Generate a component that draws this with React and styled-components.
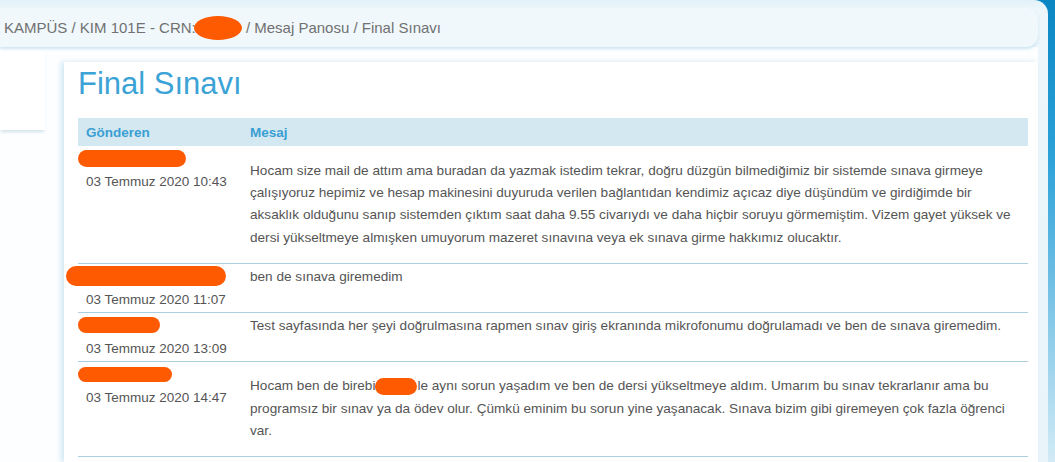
import React from 'react'
import styled, { createGlobalStyle } from 'styled-components'

const GlobalStyle = createGlobalStyle`
  html, body {
    margin: 0;
    padding: 0;
  }
  body {
    font-family: "Liberation Sans", Arial, sans-serif;
    background: #ffffff;
  }
`

const Page = styled.div`
  display: flex;
  height: 100vh;
  overflow: hidden;
  background: linear-gradient(to bottom, #0a86c3 0%, #2da2d9 35%, #86c9e8 70%, #d2ebf6 100%);
`

const Frame = styled.div`
  flex: 1;
  margin-right: 7px;
  display: flex;
  flex-direction: column;
  padding: 8px 10px 0 0;
  background: linear-gradient(to bottom, #e2f1f9 0px, #ecf6fb 8px, #e8f4fa 100%);
  border-top-right-radius: 14px;
`

const Breadcrumb = styled.div`
  height: 39px;
  flex-shrink: 0;
  display: flex;
  align-items: center;
  padding-left: 4px;
  white-space: pre;
  background: #f0f8fc;
  border-radius: 0 12px 12px 0;
  box-shadow: 0 2px 3px rgba(200, 226, 240, 0.9);
  font-size: 15px;
  color: #717171;
  position: relative;
  z-index: 1;
`

const CrumbBlob = styled.span`
  display: inline-block;
  width: 48px;
  height: 24px;
  margin-left: -2px;
  border-radius: 50%;
  background: #fe5a02;
`

const Content = styled.div`
  flex: 1;
  display: flex;
  align-items: flex-start;
  gap: 19px;
  background: #fdfeff;
`

const Sidebar = styled.div`
  width: 45px;
  height: 80px;
  margin-top: 3px;
  background: #ffffff;
  box-shadow: 0 3px 3px -1px rgba(205, 224, 234, 0.9);
`

const Panel = styled.div`
  flex: 1;
  align-self: stretch;
  margin-top: 15px;
  padding: 4px 10px 0 14px;
  background: #ffffff;
  box-shadow: -3px 0 5px rgba(205, 230, 243, 0.9);
`

const Title = styled.h1`
  margin: 0 0 16px;
  font-size: 31px;
  line-height: 36px;
  font-weight: normal;
  color: #3ba3d6;
`

const Table = styled.table`
  width: 100%;
  border-collapse: collapse;
  font-size: 13.5px;
  color: #555555;
`

const HeadCell = styled.th`
  height: 28px;
  padding: 0 8px;
  width: ${p => p.$width || 'auto'};
  background: #d4e8f1;
  color: #3a9fd3;
  font-weight: bold;
  text-align: left;
`

const SenderCell = styled.td`
  padding: 1px 8px;
  vertical-align: top;
  line-height: 23px;
  border-bottom: 1px solid #a9cfe1;
  white-space: nowrap;
`

const NameLine = styled.div`
  height: 23px;
  display: flex;
  align-items: center;
`

const NameBlob = styled.span`
  display: block;
  width: ${p => p.$w}px;
  height: ${p => p.$h}px;
  margin-left: ${p => p.$left}px;
  border-radius: ${p => p.$h / 2}px;
  background: #fe5a02;
`

const DateLine = styled.div`
  height: 23px;
`

const MessageCell = styled.td`
  padding: 2px 8px;
  vertical-align: top;
  line-height: 22.4px;
  font-size: 13.6px;
  border-bottom: 1px solid #a9cfe1;
`

const Message = styled.p`
  margin: ${p => (p.$spaced ? '11.5px 0' : '0')};
  white-space: nowrap;
`

const InlineBlob = styled.span`
  display: inline-block;
  width: 42px;
  height: 17px;
  vertical-align: -5px;
  border-radius: 9px;
  background: #fe5a02;
`

const posts = [
  {
    blob: { w: 108, h: 17, left: -8 },
    date: '03 Temmuz 2020 10:43',
    spaced: true,
    text: (
      <>
        Hocam size mail de attım ama buradan da yazmak istedim tekrar, doğru düzgün bilmediğimiz bir sistemde sınava girmeye<br />
        çalışıyoruz hepimiz ve hesap makinesini duyuruda verilen bağlantıdan kendimiz açıcaz diye düşündüm ve girdiğimde bir<br />
        aksaklık olduğunu sanıp sistemden çıktım saat daha 9.55 civarıydı ve daha hiçbir soruyu görmemiştim. Vizem gayet yüksek ve<br />
        dersi yükseltmeye almışken umuyorum mazeret sınavına veya ek sınava girme hakkımız olucaktır.
      </>
    ),
  },
  {
    blob: { w: 160, h: 20, left: -20 },
    date: '03 Temmuz 2020 11:07',
    text: 'ben de sınava giremedim',
  },
  {
    blob: { w: 82, h: 16, left: -8 },
    date: '03 Temmuz 2020 13:09',
    text: 'Test sayfasında her şeyi doğrulmasına rapmen sınav giriş ekranında mikrofonumu doğrulamadı ve ben de sınava giremedim.',
  },
  {
    blob: { w: 94, h: 15, left: -8 },
    date: '03 Temmuz 2020 14:47',
    spaced: true,
    text: (
      <>
        Hocam ben de birebi<InlineBlob />le aynı sorun yaşadım ve ben de dersi yükseltmeye aldım. Umarım bu sınav tekrarlanır ama bu<br />
        programsız bir sınav ya da ödev olur. Çümkü eminim bu sorun yine yaşanacak. Sınava bizim gibi giremeyen çok fazla öğrenci<br />
        var.
      </>
    ),
  },
]

const App = () => {
  return (
    <>
      <GlobalStyle />
      <Page>
        <Frame>
          <Breadcrumb>
            KAMPÜS / KIM 101E - CRN:<CrumbBlob /> / Mesaj Panosu / Final Sınavı
          </Breadcrumb>
          <Content>
            <Sidebar />
            <Panel>
              <Title>Final Sınavı</Title>
              <Table>
                <thead>
                  <tr>
                    <HeadCell $width="148px">Gönderen</HeadCell>
                    <HeadCell>Mesaj</HeadCell>
                  </tr>
                </thead>
                <tbody>
                  {posts.map((post, i) => (
                    <tr key={i}>
                      <SenderCell>
                        <NameLine>
                          <NameBlob $w={post.blob.w} $h={post.blob.h} $left={post.blob.left} />
                        </NameLine>
                        <DateLine>{post.date}</DateLine>
                      </SenderCell>
                      <MessageCell>
                        <Message $spaced={post.spaced}>{post.text}</Message>
                      </MessageCell>
                    </tr>
                  ))}
                </tbody>
              </Table>
            </Panel>
          </Content>
        </Frame>
      </Page>
    </>
  )
}

export default App
